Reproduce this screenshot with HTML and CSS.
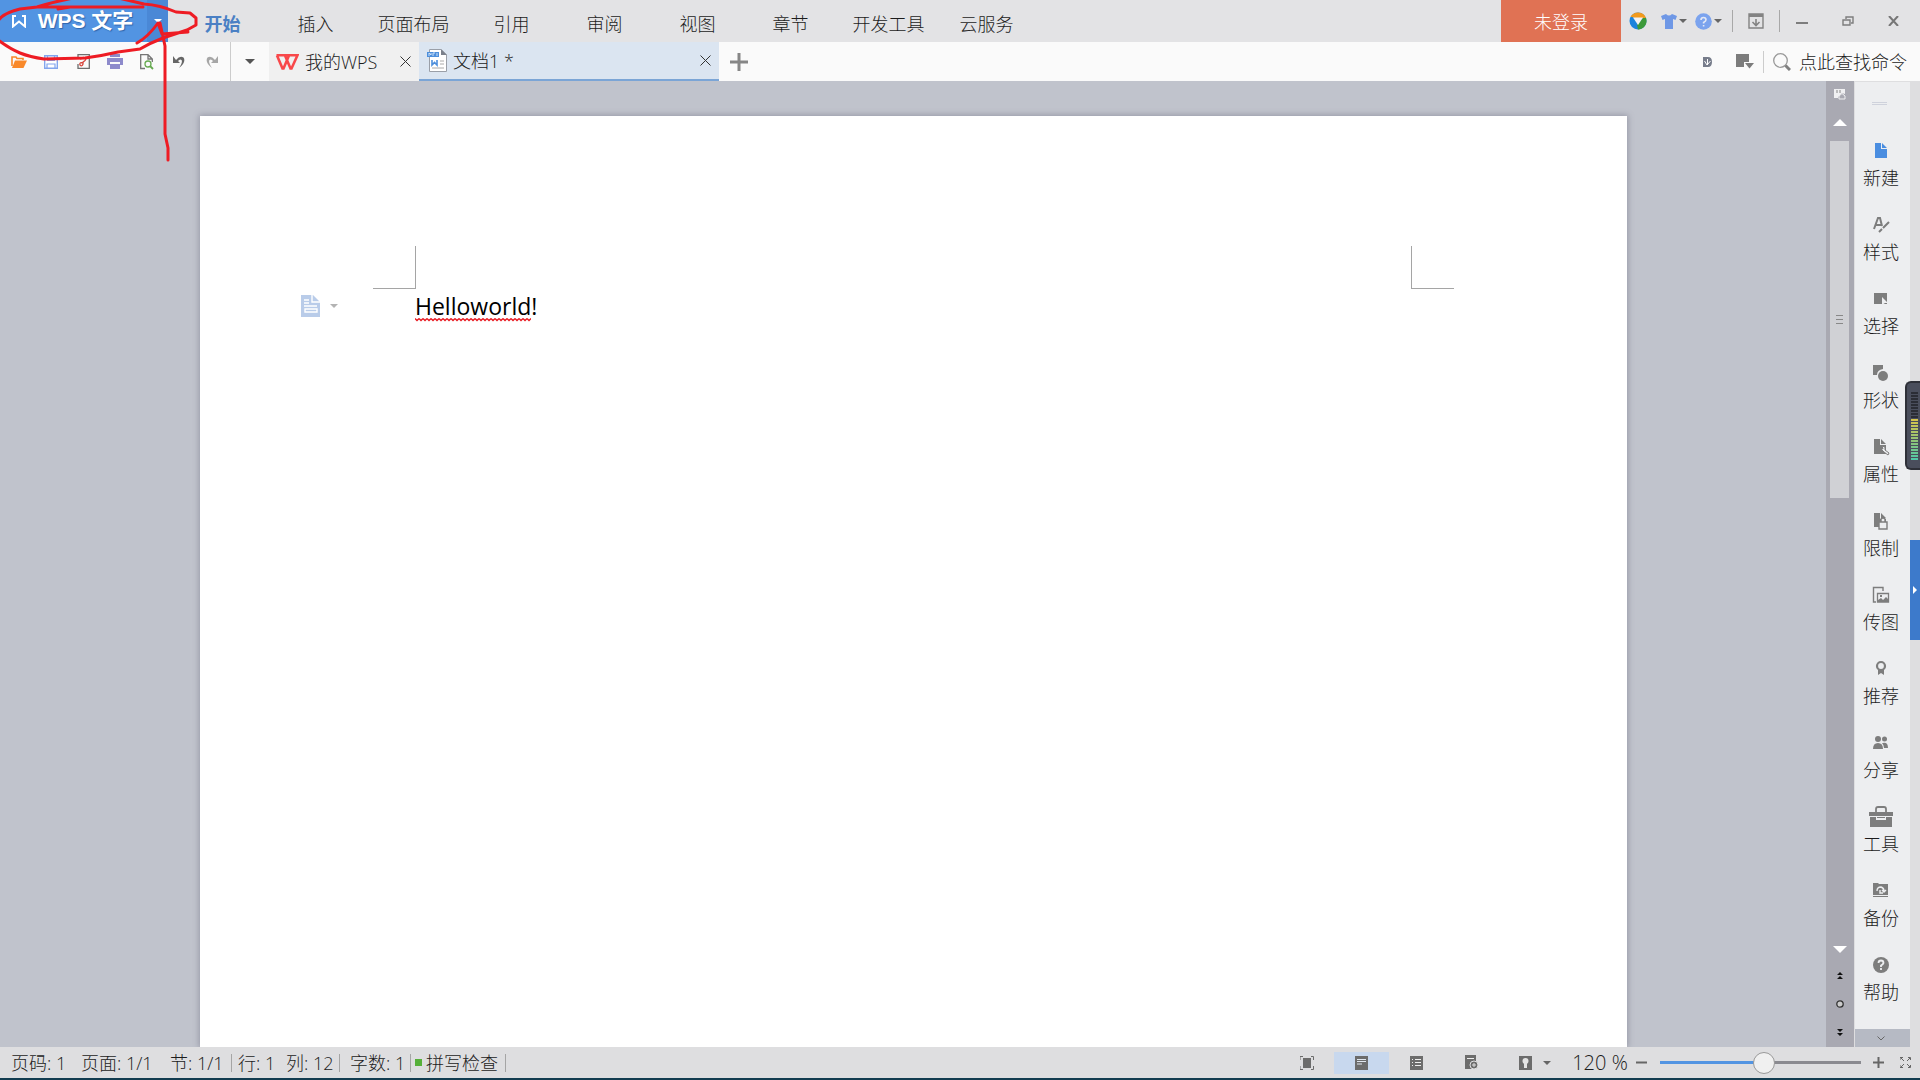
FILE: index.html
```html
<!DOCTYPE html>
<html lang="zh-CN">
<head>
    <meta charset="utf-8">
    <title>WPS 文字</title>
    <link rel="stylesheet" href="styles.css">
</head>

<body>
    <header class="menubar">
        <div class="app">
            <button class="app-btn" type="button">
                <svg width="14" height="13" viewBox="0 0 14 13"><path d="M4 1H1V11.500L7 6.500L13 11.500V1H10" fill="none" stroke="#fff" stroke-width="2"/></svg>
                <span>WPS 文字</span>
            </button>
            <button class="app-arrow" type="button" aria-label="菜单"><i class="caret"></i></button>
        </div>
        <nav class="menu">
            <a class="on" href="#">开始</a>
            <a href="#">插入</a>
            <a class="wide" href="#">页面布局</a>
            <a href="#">引用</a>
            <a href="#">审阅</a>
            <a href="#">视图</a>
            <a href="#">章节</a>
            <a class="wide" href="#">开发工具</a>
            <a href="#">云服务</a>
        </nav>
        <button class="login" type="button">未登录</button>
        <div class="wintools">
            <button type="button" class="w-ball" aria-label="浏览器">
                <svg width="18" height="18" viewBox="0 0 18 18"><circle cx="9" cy="9" r="8.500" fill="#1b84dd"/><path d="M1.500 5A8.500 8.500 0 0 1 17 6L9 7L3 5Z" fill="#f39a1c"/><path d="M17 6A8.500 8.500 0 0 1 9 17.500L8 13L14 6Z" fill="#3c9a3a"/><path d="M4 5.500H14L9 13Z" fill="#f3f3f3"/></svg>
            </button>
            <button type="button" class="w-drop" aria-label="皮肤">
                <svg width="16" height="15" viewBox="0 0 16 15"><path d="M0 2L5 0Q8 3 11 0L16 2L14.500 6L12 5V15H4V5L1.500 6Z" fill="#6f98e6"/></svg><i class="caret dark"></i>
            </button>
            <button type="button" class="w-drop" aria-label="帮助">
                <svg width="17" height="17" viewBox="0 0 17 17"><circle cx="8.500" cy="8.500" r="8.300" fill="#7ba3ee"/><path d="M6 7Q6 4.500 8.500 4.500T11 6.800Q11 8 8.600 9.500V10.500M8.600 12V13.500" fill="none" stroke="#e3e8f5" stroke-width="1.600"/></svg><i class="caret dark"></i>
            </button>
            <span class="bar"></span>
            <button type="button" class="w-btn" aria-label="隐藏功能区">
                <svg width="16" height="16" viewBox="0 0 16 16"><path d="M1 1H15V15H1Z" fill="none" stroke="#838383" stroke-width="1.400"/><path d="M1 1H15V4H1Z" fill="#838383"/><path d="M8 6V12M4.500 9L8 12.500L11.500 9" fill="none" stroke="#838383" stroke-width="1.600"/></svg>
            </button>
            <span class="bar"></span>
            <button type="button" class="w-btn" aria-label="最小化">
                <svg width="12" height="16" viewBox="0 0 12 16"><path d="M0 10H12" stroke="#7d7d7d" stroke-width="2"/></svg>
            </button>
            <button type="button" class="w-btn" aria-label="还原">
                <svg width="12" height="10" viewBox="0 0 12 10"><path d="M4 3V1H11V7H9M1 4H8V9H1Z" fill="none" stroke="#7d7d7d" stroke-width="1.400"/></svg>
            </button>
            <button type="button" class="w-btn" aria-label="关闭">
                <svg width="11" height="10" viewBox="0 0 11 10"><path d="M1 0L10 10M10 0L1 10" stroke="#777" stroke-width="2"/></svg>
            </button>
        </div>
    </header>

    <div class="tabbar">
        <div class="quick">
            <button type="button" aria-label="打开"><svg width="16" height="12" viewBox="0 0 16 12"><path d="M1 10V1H5L6 2.500H12V4" fill="none" stroke="#f9892a" stroke-width="1.600"/><path d="M1 12L4 4.500H16L12.500 12Z" fill="#f9892a"/></svg></button>
            <button type="button" aria-label="保存"><svg width="14" height="14" viewBox="0 0 14 14"><path d="M.7.7H13.300V13.300H.7Z" fill="#fff" stroke="#82a5ee" stroke-width="1.400"/><path d="M3.500 1V5.500H10.500V1M3 13V9H11V13" fill="none" stroke="#82a5ee" stroke-width="1.200"/></svg></button>
            <button type="button" aria-label="输出为PDF"><svg width="14" height="15" viewBox="0 0 14 15"><path d="M2 4V.7H13.300V14.300H2V10" fill="none" stroke="#6f6f6f" stroke-width="1.300"/><path d="M4.500 5.500Q5 3 8 3.500Q11 4.500 9 6.500L6.500 8.500Q3 8.500 4 11Q6 13 7 10V8" fill="none" stroke="#d8473e" stroke-width="1.300"/></svg></button>
            <button type="button" aria-label="打印"><svg width="16" height="15" viewBox="0 0 16 15"><path d="M3 0H13V3H3ZM0 4H16V11H13V8H3V11H0ZM3 9H13V15H3Z" fill="#8d8acb"/><path d="M3 9.500H13" stroke="#fafafa"/></svg></button>
            <button type="button" aria-label="打印预览"><svg width="14" height="16" viewBox="0 0 14 16"><path d="M5 14.500H.7V.7H8L12.300 5V8M8 1V5H12" fill="none" stroke="#757575" stroke-width="1.300"/><circle cx="8" cy="10" r="3" fill="none" stroke="#65a94f" stroke-width="1.300"/><path d="M10 12L13 15" stroke="#65a94f" stroke-width="1.800"/></svg></button>
            <button type="button" aria-label="撤销"><svg width="13" height="13" viewBox="0 0 13 13"><path d="M3 5Q7 0 10.500 2.500Q13.500 7 6 13Q10 7 8.500 5Q7 3.500 5 6L7 8H0V1Z" fill="#666"/></svg></button>
            <button type="button" aria-label="恢复"><svg width="13" height="13" viewBox="0 0 13 13"><path d="M10 5Q6 0 2.500 2.500Q-.5 7 7 13Q3 7 4.500 5Q6 3.500 8 6L6 8H13V1Z" fill="#a6a6a6"/></svg></button>
        </div>
        <button class="more" type="button" aria-label="自定义快速访问工具栏"><i class="caret big"></i></button>
        <div class="tab home">
            <svg width="24" height="16" viewBox="0 0 24 16"><path d="M1.500 1.200H22.500L16.500 14.500H15.500L10 1.500M2 1.500L7.500 14.500H8.500L14 1.500" fill="none" stroke="#f8484a" stroke-width="2.600"/></svg>
            <span>我的WPS</span>
            <button type="button" class="shut" aria-label="关闭"><svg width="11" height="11" viewBox="0 0 11 11"><path d="M.5.5L10.500 10.500M10.500.5L.5 10.500" stroke="#333"/></svg></button>
        </div>
        <div class="tab doc">
            <svg width="20" height="23" viewBox="0 0 20 23"><path d="M2.500.5H14L19.500 6V22.500H2.500Z" fill="#fff" stroke="#9a9fa8"/><path d="M14 0L20 6H14Z" fill="#7b818c"/><path d="M0 3H12V8H0Z" fill="#4d8fdc"/><path d="M2 7V4L4 6V4M6 7V4H8M10 4V7" fill="none" stroke="#cfe1f7"/><path d="M5 11V16L7.500 13.500L10 16V11" fill="none" stroke="#4d8fdc" stroke-width="1.600"/><path d="M13 12H17M13 15H17M5 19H17" stroke="#aaa"/></svg>
            <span>文档1 *</span>
            <button type="button" class="shut" aria-label="关闭"><svg width="11" height="11" viewBox="0 0 11 11"><path d="M.5.5L10.500 10.500M10.500.5L.5 10.500" stroke="#333"/></svg></button>
        </div>
        <button class="add" type="button" aria-label="新建标签"><svg width="18" height="18" viewBox="0 0 18 18"><path d="M9 0V18M0 9H18" stroke="#868686" stroke-width="3"/></svg></button>
        <div class="finder">
            <button type="button" aria-label="稻壳"><svg width="9" height="10" viewBox="0 0 9 10"><path d="M0 0H5Q9 0 9 5T5 10H0Z" fill="#777d8b"/><path d="M1.500 4L4 8L7.500 4M4.500 2V8" fill="none" stroke="#fff"/></svg></button>
            <button type="button" aria-label="显示"><svg width="18" height="15" viewBox="0 0 18 15"><path d="M0 0H13V8H8V13H0Z" fill="#7c7c7c"/><path d="M9 9H18L13.500 14.500Z" fill="#7c7c7c"/></svg></button>
            <span class="bar"></span>
            <label for="find" aria-label="查找"><svg width="18" height="18" viewBox="0 0 18 18"><circle cx="7.500" cy="7.500" r="6.800" fill="none" stroke="#999" stroke-width="1.300"/><path d="M12.500 12.500L17 17" stroke="#808080" stroke-width="3"/></svg></label>
            <input id="find" type="text" placeholder="点此查找命令">
        </div>
    </div>

    <main class="work">
        <div class="canvas">
            <article class="page">
                <i class="corner left"></i>
                <i class="corner right"></i>
                <button class="para" type="button" aria-label="段落布局">
                    <svg width="19" height="22" viewBox="0 0 19 22"><path d="M0 0H12L19 7V22H0Z" fill="#b9cce9"/><path d="M11 0V7H19M3 5H8M3 8H8M3 11H16M4 14H16V17H4Z" fill="none" stroke="#fff" stroke-width="1.400"/></svg><i class="caret pale"></i>
                </button>
                <p><span class="typo">Helloworld<svg class="wave" height="4"><defs><pattern id="zig" width="4" height="4" patternUnits="userSpaceOnUse"><path d="M0 .5L2 2.500L4 .5" fill="none" stroke="#e8141c" stroke-width="1.300"/></pattern></defs><rect width="100%" height="4" fill="url(#zig)"/></svg></span>!</p>
            </article>
        </div>

        <div class="scroll">
            <svg class="ruler" width="12" height="11" viewBox="0 0 12 11"><path d="M0 0H11V5L8 4L4 8V9H0Z" fill="#f0f0f2"/><path d="M3 1V4M6 1V4" stroke="#888"/><path d="M5 10V7L8 4.500L11 7V10Z" fill="#a9a9b2" stroke="#f0f0f2"/></svg>
            <i class="tri up"></i>
            <div class="track"><div class="thumb"><i></i><i></i><i></i></div></div>
            <i class="tri down"></i>
            <svg class="jump" width="8" height="8" viewBox="0 0 8 8"><path d="M4 0L7 3H1ZM4 4L7 7H1Z" fill="#111"/></svg>
            <svg class="jump" width="8" height="8" viewBox="0 0 8 8"><circle cx="4" cy="4" r="3.200" fill="#ccc" stroke="#333" stroke-width="1.300"/></svg>
            <svg class="jump" width="8" height="8" viewBox="0 0 8 8"><path d="M4 4L7 1H1ZM4 8L7 5H1Z" fill="#111"/></svg>
        </div>

        <aside class="side">
            <i class="grip"></i>
            <button type="button"><svg width="24" height="24" viewBox="0 0 24 24"><path d="M6 4H12V10H18V19H6ZM13 4L18 9H13Z" fill="#4a8de0"/></svg>新建</button>
            <button type="button"><svg width="24" height="24" viewBox="0 0 24 24"><path d="M5 16L9 5H11L13 13M7 12H12" fill="none" stroke="#7d7d7d" stroke-width="2"/><path d="M20 9L14 15M13 16L10 19" stroke="#7d7d7d" stroke-width="2"/></svg>样式</button>
            <button type="button"><svg width="24" height="24" viewBox="0 0 24 24"><path d="M5 6H18V17H5Z" fill="#7d7d7d"/><path d="M13 10L19 16H16L13 18Z" fill="#edeef0"/><path d="M16 16H18V17H16Z" fill="#7d7d7d"/></svg>选择</button>
            <button type="button"><svg width="24" height="24" viewBox="0 0 24 24"><path d="M4 4H14V8Q8 9 8 14H4Z" fill="#7d7d7d"/><circle cx="14" cy="15" r="5" fill="#7d7d7d"/></svg>形状</button>
            <button type="button"><svg width="24" height="24" viewBox="0 0 24 24"><path d="M5 4H11V10H17V19H5ZM12 4L17 9H12Z" fill="#7d7d7d"/><path d="M11 13L15 17L19 20L20 18L16 15V12L13 11L14 14Z" fill="#edeef0" stroke="#7d7d7d"/></svg>属性</button>
            <button type="button"><svg width="24" height="24" viewBox="0 0 24 24"><path d="M5 4H11V10H17V18H5ZM12 4L17 9H12Z" fill="#7d7d7d"/><path d="M10 13H18V20H10ZM12 13V10Q14 8 16 10V13" fill="#edeef0" stroke="#7d7d7d" stroke-width="1.400"/></svg>限制</button>
            <button type="button"><svg width="24" height="24" viewBox="0 0 24 24"><path d="M7 19H4.500V4.500H14V8" fill="none" stroke="#7d7d7d" stroke-width="1.400"/><path d="M8.500 10.500H19.500V19H8.500Z" fill="none" stroke="#7d7d7d" stroke-width="1.300"/><path d="M9 17L12 15L14 17L17 14L19 16V19H9ZM11 12H13V14H11Z" fill="#7d7d7d"/></svg>传图</button>
            <button type="button"><svg width="24" height="24" viewBox="0 0 24 24"><circle cx="12" cy="9" r="4" fill="none" stroke="#7d7d7d" stroke-width="2.200"/><path d="M9 13V18L12 16L15 18V13" fill="#7d7d7d"/></svg>推荐</button>
            <button type="button"><svg width="24" height="24" viewBox="0 0 24 24"><circle cx="9" cy="8" r="3" fill="#7d7d7d"/><circle cx="15.500" cy="8" r="2.500" fill="#7d7d7d"/><path d="M4 18Q4 12 9 12T14 18ZM14 12Q19 11 19 17H15Q15 14 13 12Z" fill="#7d7d7d"/></svg>分享</button>
            <button type="button"><svg width="24" height="24" viewBox="0 0 24 24"><path d="M7 7V4Q7 2 9 2H15Q17 2 17 4V7" fill="none" stroke="#7d7d7d" stroke-width="1.800"/><path d="M0 7H24V11H0ZM1 12H7V15H17V12H23V22H1ZM8 12H16V13H8Z" fill="#7d7d7d"/></svg>工具</button>
            <button type="button"><svg width="24" height="24" viewBox="0 0 24 24"><path d="M4 4H9L10 5H19V16H4ZM4 17H19V18H4Z" fill="#7d7d7d"/><path d="M8 12Q8 8 12 8Q15 9 15 12M13 11L15 13L17 11M11 11V14H14" fill="none" stroke="#edeef0" stroke-width="1.400"/></svg>备份</button>
            <button type="button"><svg width="24" height="24" viewBox="0 0 24 24"><circle cx="12" cy="12" r="8" fill="#7d7d7d"/><path d="M9.500 10Q9.500 7.500 12 7.500T14.500 10Q14 11.500 12 12.500V14M12 15V17" fill="none" stroke="#edeef0" stroke-width="1.800"/></svg>帮助</button>
            <button type="button" class="fold" aria-label="更多"><svg width="8" height="5" viewBox="0 0 8 5"><path d="M.5.5L4 4L7.500.5" fill="none" stroke="#666"/></svg></button>
        </aside>

        <div class="edge">
            <div class="meter"></div>
            <button type="button" class="pull" aria-label="展开"><i></i></button>
        </div>
    </main>

    <footer class="status">
        <span class="s-page">页码: 1</span>
        <span class="s-pages">页面: 1/1</span>
        <span class="s-sect">节: 1/1</span>
        <span class="s-row">行: 1</span>
        <span class="s-col">列: 12</span>
        <span class="s-words">字数: 1</span>
        <span class="s-spell"><i></i>拼写检查</span>
        <div class="views">
            <button type="button" aria-label="全屏显示"><svg width="14" height="14" viewBox="0 0 14 14"><path d="M3 2H11V12H3Z" fill="#6c6c6c"/><path d="M0 4V.5H3M11 .5H13.500V4M0 10V13.500H3M11 13.500H13.500V10" fill="none" stroke="#6c6c6c"/></svg></button>
            <button type="button" class="on" aria-label="页面视图"><svg width="13" height="14" viewBox="0 0 13 14"><path d="M0 0H13V14H0Z" fill="#6c6c6c"/><path d="M2 3.500H11M2 5.500H11M2 8H7" stroke="#e0e6ee"/></svg></button>
            <button type="button" aria-label="大纲视图"><svg width="13" height="14" viewBox="0 0 13 14"><path d="M0 0H13V14H0Z" fill="#6c6c6c"/><path d="M2 3.500H3M5 3.500H11M2 6.500H3M5 6.500H11M2 9.500H3M5 9.500H11" stroke="#eee"/></svg></button>
            <button type="button" aria-label="Web版式"><svg width="14" height="15" viewBox="0 0 14 15"><path d="M0 0H11V14H0Z" fill="#6c6c6c"/><path d="M2 3.500H9" stroke="#eee"/><circle cx="9" cy="10" r="4" fill="#6c6c6c" stroke="#dedee0"/><path d="M7 10H11M9 8V12" stroke="#dedee0"/></svg></button>
            <button type="button" class="eye" aria-label="护眼模式"><svg width="13" height="14" viewBox="0 0 13 14"><path d="M0 0H13V14H0Z" fill="#6c6c6c"/><circle cx="6.500" cy="5" r="3" fill="#e4e4e4"/><path d="M5 7H8V12H5Z" fill="#e4e4e4"/></svg><i class="caret dark"></i></button>
        </div>
        <label class="zoom" for="zoom">120 %</label>
        <button type="button" class="step" aria-label="缩小"><svg width="11" height="11" viewBox="0 0 11 11"><path d="M0 5.500H11" stroke="#666" stroke-width="2"/></svg></button>
        <input id="zoom" type="range" min="0" max="100" value="52">
        <button type="button" class="step" aria-label="放大"><svg width="11" height="11" viewBox="0 0 11 11"><path d="M0 5.500H11M5.500 0V11" stroke="#666" stroke-width="2"/></svg></button>
        <button type="button" class="full" aria-label="全屏"><svg width="11" height="11" viewBox="0 0 11 11"><path d="M0 3V.5H3M8 .5H10.500V3M0 8V10.500H3M8 10.500H10.500V8M1 1L4 4M10 1L7 4M1 10L4 7M10 10L7 7" fill="none" stroke="#666"/></svg></button>
    </footer>

    <!-- red pen marks over the app button -->
    <svg class="pen" width="200" height="164" viewBox="0 0 200 164">
        <path d="M79-3Q56 1 37 7L20 9Q3 13-2 21M-2 40Q10 49 20 53T44 59L85 58Q101 56 118 52L140 49Q150 43 163 38L187 30L196 25V18L190 13L176 12Q160 5 144 4L114-3M37 7L58 7H143M58 9L70 7M137 43Q148 37 158 23L162 34L188 32M160 23L165 46V134L168 148V160"/>
    </svg>
</body>
</html>
```

FILE: styles.css
```css
*{
    box-sizing: border-box;
}
body{
    margin: 0;
    height: 100vh;
    display: flex;
    flex-direction: column;
    overflow: hidden;
    font-family: "Open Sans", "Noto Sans CJK SC", sans-serif;
    font-size: 18px;
    font-weight: 300;
    color: #1c1c1c;
    border-bottom: 2px solid #123c50;
}
button, input{
    border: none;
    outline: none;
    background: none;
    padding: 0;
    margin: 0;
    font: inherit;
    color: inherit;
}
button{
    display: flex;
    align-items: center;
    justify-content: center;
    flex-shrink: 0;
}
svg{
    display: block;
    flex-shrink: 0;
}
.caret{
    border: 4px solid transparent;
    border-top-color: #fff;
    border-bottom: none;
}
.caret.dark{
    border-top-color: #666;
}
.caret.big{
    border-width: 5px;
    border-bottom: none;
    border-top-color: #555;
}
.caret.pale{
    border-top-color: #b3b3b3;
}
.bar{
    width: 1px;
    height: 22px;
    background: #a8a8a8;
}

/* menu bar */
.menubar{
    display: flex;
    height: 42px;
    flex-shrink: 0;
    background: #e3e3e5;
}
.app{
    display: flex;
    width: 168px;
    margin-right: 8px;
}
.app-btn{
    width: 147px;
    gap: 12px;
    padding-right: 2px;
    background: #5294e2;
    color: #fff;
    font-family: "Liberation Sans", "Noto Sans CJK SC", sans-serif;
    font-size: 21px;
    line-height: 24px;
    font-weight: bold;
    text-shadow: 1px 1px 1px #2f65ac;
}
.app-arrow{
    width: 21px;
    background: #4a88d6;
}
.menu{
    display: flex;
    flex: 1;
}
.menu a{
    width: 93px;
    padding-top: 6px;
    line-height: 36px;
    text-align: center;
    text-decoration: none;
    color: #1c1c1c;
}
.menu a.wide{
    width: 103px;
}
.menu a.on{
    font-weight: bold;
    color: #4a80c4;
}
.login{
    width: 120px;
    background: #e07254;
    color: #fff;
}
.wintools{
    display: flex;
    align-items: center;
    width: 299px;
    padding-right: 4px;
}
.w-ball{
    width: 34px;
}
.w-drop{
    width: 33px;
    gap: 2px;
    margin-left: 2px;
}
.w-drop + .bar{
    margin-left: 7px;
}
.w-btn{
    flex: 1;
}

/* quick access and document tabs */
.tabbar{
    display: flex;
    height: 39px;
    flex-shrink: 0;
    background: #fafafa;
}
.quick{
    display: flex;
    width: 231px;
    padding-left: 3px;
    border-right: 1px solid #ccc;
}
.quick button{
    width: 32px;
}
.more{
    width: 38px;
}
.tab{
    display: flex;
    align-items: center;
    gap: 6px;
    padding: 0 6px;
    line-height: 36px;
}
.tab span{
    flex: 1;
}
.home{
    width: 150px;
    background: #f0f0f0;
}
.doc{
    width: 300px;
    padding-left: 8px;
    background: #dbe5f1;
    border-bottom: 2px solid #7ba5d6;
}
.shut{
    width: 16px;
    height: 20px;
}
.add{
    width: 40px;
}
.finder{
    display: flex;
    align-items: center;
    margin-left: auto;
}
.finder button{
    width: 37px;
}
.finder label{
    margin: 0 8px 0 9px;
}
.finder .bar{
    background: #ccc;
}
.finder input{
    width: 121px;
    line-height: 36px;
}
.finder input::placeholder{
    color: #1c1c1c;
    opacity: 1;
}

/* document area */
.work{
    display: flex;
    flex: 1;
    min-height: 0;
    background: #c0c3cc;
}
.canvas{
    flex: 1;
    padding: 35px 199px 0 200px;
    overflow: hidden;
}
.page{
    position: relative;
    height: 100%;
    padding: 172px 215px;
    background: #fff;
    box-shadow: 0 0 6px 1px #9698a6;
}
.page p{
    margin: 0;
    font-family: "Open Sans", sans-serif;
    font-size: 23px;
    font-weight: 400;
    line-height: 36px;
    color: #000;
}
.corner{
    position: absolute;
    top: 130px;
    width: 43px;
    height: 43px;
    border-bottom: 1px solid #a5a5a5;
}
.corner.left{
    left: 173px;
    border-right: 1px solid #a5a5a5;
}
.corner.right{
    right: 173px;
    border-left: 1px solid #a5a5a5;
}
.para{
    position: absolute;
    top: 179px;
    left: 101px;
    gap: 10px;
}
.typo{
    position: relative;
}
.wave{
    position: absolute;
    left: 0;
    bottom: 0;
    width: 100%;
}

/* scroll bar */
.scroll{
    display: flex;
    flex-direction: column;
    align-items: center;
    width: 28px;
    padding-right: 1px;
    background: #a9a9b2;
}
.ruler{
    margin-top: 8px;
}
.tri{
    border: 7px solid transparent;
}
.tri.up{
    margin-top: 19px;
    border-top: none;
    border-bottom-color: #fff;
}
.tri.down{
    border-bottom: none;
    border-top-color: #fff;
    margin-bottom: 19px;
}
.track{
    flex: 1;
    width: 19px;
    margin: 15px 0 12px;
}
.thumb{
    display: flex;
    flex-direction: column;
    align-items: center;
    justify-content: center;
    gap: 3px;
    height: 45%;
    background: #d0d1d5;
}
.thumb i{
    width: 7px;
    height: 1px;
    background: #888;
}
.jump{
    margin-bottom: 20px;
}
.jump:last-child{
    margin-bottom: 11px;
}

/* side panel */
.side{
    display: flex;
    flex-direction: column;
    width: 56px;
    background: #edeef0;
    border-left: 1px solid #dedee0;
    border-top: 1px solid #dedee0;
}
.side button{
    flex-direction: column;
    gap: 2px;
    height: 74px;
    padding-right: 3px;
    line-height: 26px;
}
.grip{
    width: 15px;
    height: 3px;
    margin: 20px 17px 23px;
    border: solid #cfd2dc;
    border-width: 1px 0;
}
.side .fold{
    height: 18px;
    margin-top: auto;
    background: #b6bac4;
}
.edge{
    position: relative;
    width: 10px;
    background: #dedee0;
}
.meter{
    position: absolute;
    top: 300px;
    right: 0;
    width: 15px;
    height: 89px;
    border: 2px solid #2e3038;
    border-right: none;
    border-radius: 6px 0 0 6px;
    background: #4a4e5c;
}
.meter::before{
    content: "";
    position: absolute;
    top: 9px;
    right: 2px;
    width: 7px;
    height: 69px;
    background: repeating-linear-gradient(transparent 0 2px, #4a4e5c 2px 3px), linear-gradient(#2b2d35 27px, #d8c64a 27px, #8cc47a 50px, #4cc8ac);
}
.pull{
    position: absolute;
    top: 459px;
    left: 0;
    width: 10px;
    height: 100px;
    background: #3d7acb;
}
.pull i{
    border: 4px solid transparent;
    border-left-color: #fff;
    border-right: none;
}

/* status bar */
.status{
    display: flex;
    align-items: center;
    height: 31px;
    flex-shrink: 0;
    padding-left: 11px;
    background: #dedee0;
    white-space: nowrap;
}
.status > span{
    line-height: 18px;
}
.s-page{
    width: 70px;
}
.s-pages{
    width: 89px;
}
.s-sect{
    width: 62px;
    border-right: 1px solid #a5a5a5;
}
.s-row{
    width: 54px;
    padding-left: 6px;
}
.s-col{
    width: 54px;
    border-right: 1px solid #a5a5a5;
}
.s-words{
    width: 71px;
    padding-left: 10px;
    border-right: 1px solid #a5a5a5;
}
.s-spell{
    display: flex;
    align-items: center;
    gap: 4px;
    width: 95px;
    padding-left: 4px;
    border-right: 1px solid #a5a5a5;
}
.s-spell i{
    width: 7px;
    height: 7px;
    background: #56b03a;
}
.views{
    display: flex;
    margin-left: auto;
}
.views button{
    width: 55px;
    height: 22px;
}
.views .on{
    background: #c8d8ee;
}
.views .eye{
    width: 72px;
    gap: 11px;
}
.zoom{
    width: 58px;
    font-size: 20px;
    text-align: center;
}
.step{
    width: 24px;
}
.full{
    width: 30px;
}
#zoom{
    appearance: none;
    width: 201px;
    height: 22px;
    margin: 0 5px 0 7px;
    background: linear-gradient(90deg, #5294e2 52%, #8a8a90 52%) center / 100% 3px no-repeat;
}
#zoom::-webkit-slider-thumb{
    appearance: none;
    width: 22px;
    height: 22px;
    border: 1px solid #999;
    border-radius: 50%;
    background: #f0f0f0;
}

.pen{
    position: absolute;
    top: 0;
    left: 0;
    pointer-events: none;
}
.pen path{
    fill: none;
    stroke: #ee1c24;
    stroke-width: 3;
    stroke-linecap: round;
    stroke-linejoin: round;
}
```
